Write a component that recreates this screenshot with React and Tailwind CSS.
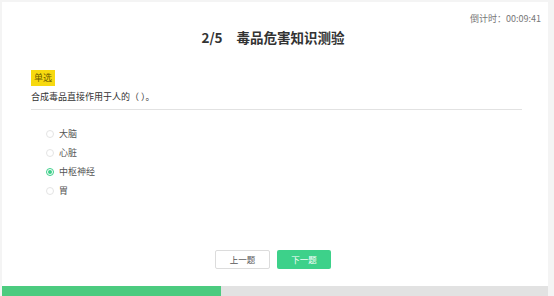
export default function App() {
  const options = ["大脑", "心脏", "中枢神经", "胃"];
  const selected = 2;
  return (
    <div
      className="w-[554px] h-[296px] bg-[#f4f4f4] flex flex-col pt-[2px] pl-[2px] pr-[6px] overflow-hidden"
      style={{ fontFamily: '"Noto Sans CJK SC", "Noto Sans", sans-serif' }}
    >
      <div className="flex-1 bg-white flex flex-col relative">
        <div className="flex justify-end pr-[7px] pt-[11px] text-[9px] leading-[12px] text-[#777]">
          倒计时：00:09:41
        </div>
        <div className="flex justify-center items-center mt-[2px] text-[13.5px] leading-[20px] font-bold text-[#333]">
          <span className="-ml-[4px]">2/5</span>
          <span className="ml-[14px]">毒品危害知识测验</span>
        </div>
        <div className="px-[29px] mt-[15px]">
          <div className="inline-flex items-center h-[16px] px-[3px] bg-[#f7d90f] text-[9px] text-[#6b5a00]">
            单选
          </div>
          <div className="mt-[4px] pb-[5px] border-b border-[#e2e2e2] text-[9px] leading-[14px] text-[#333] w-[491px]">
            合成毒品直接作用于人的（ ）。
          </div>
          <div className="mt-[17px] flex flex-col gap-[5px] pl-[15px]">
            {options.map((o, i) => (
              <div key={o} className="flex items-center h-[14px]">
                <span
                  className={
                    i === selected
                      ? "w-[8px] h-[8px] rounded-full border border-[#3ccf89] flex items-center justify-center"
                      : "w-[8px] h-[8px] rounded-full border border-[#e4e4e4]"
                  }
                >
                  {i === selected && (
                    <span className="w-[4px] h-[4px] rounded-full bg-[#3ccf89]" />
                  )}
                </span>
                <span className="ml-[5px] text-[9px] text-[#555]">{o}</span>
              </div>
            ))}
          </div>
        </div>
        <div className="flex-1" />
        <div className="flex justify-center gap-[7px] pb-[17px] pr-[4px]">
          <button className="w-[55px] h-[19px] border border-[#dcdcdc] bg-white rounded-[2px] text-[8.5px] text-[#555]">
            上一题
          </button>
          <button className="w-[54px] h-[19px] bg-[#3dd18a] rounded-[2px] text-[8.5px] text-white">
            下一题
          </button>
        </div>
      </div>
      <div className="h-[10px] bg-[#e2e2e2] flex">
        <div className="w-[219px] bg-[#4ccb7f]" />
      </div>
    </div>
  );
}
